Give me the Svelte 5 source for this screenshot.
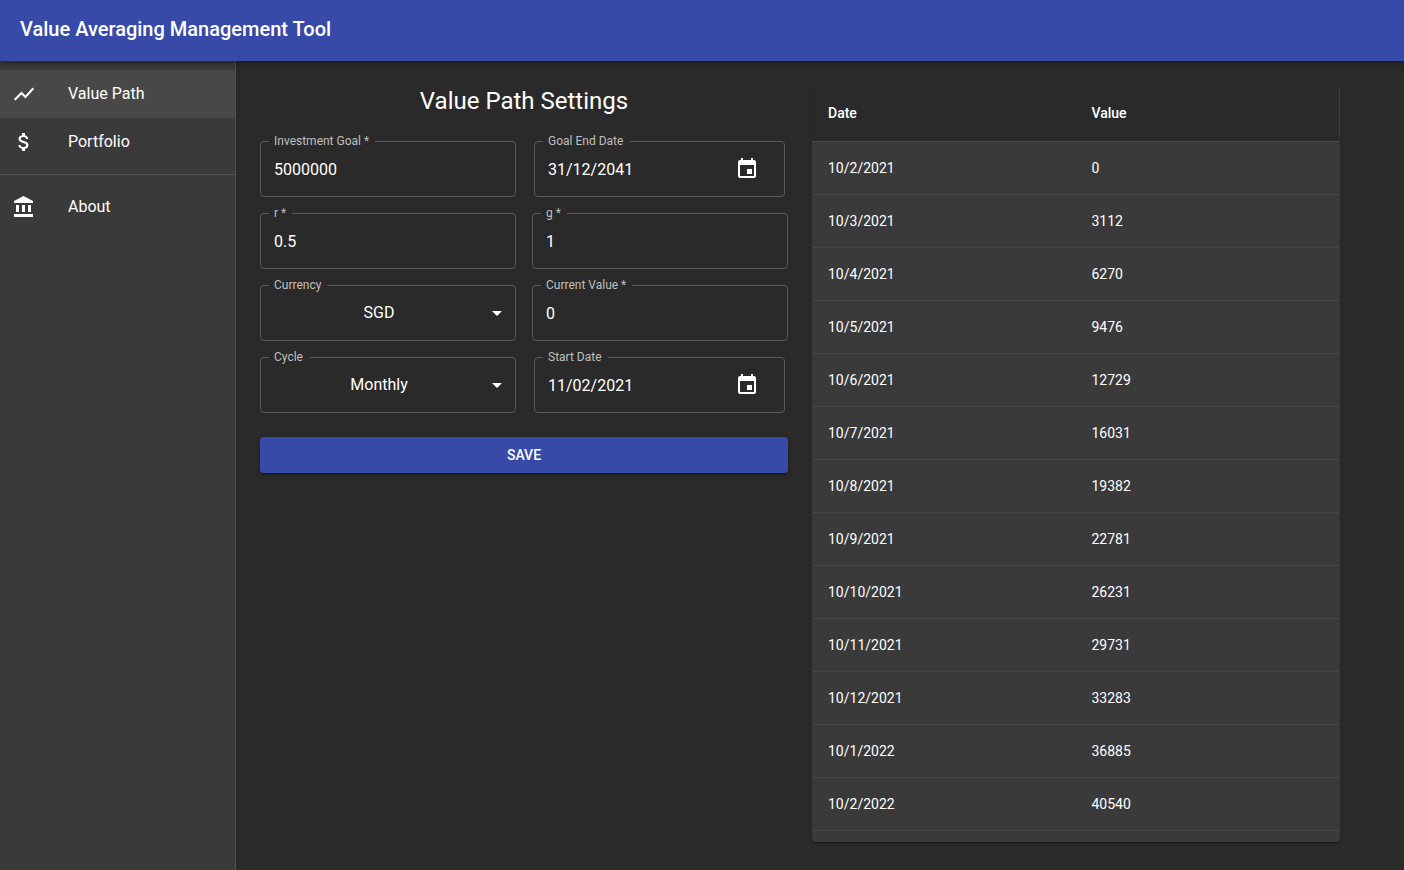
<script>
  const goalRows = [
    ['10/2/2021', 0],
    ['10/3/2021', 3112],
    ['10/4/2021', 6270],
    ['10/5/2021', 9476],
    ['10/6/2021', 12729],
    ['10/7/2021', 16031],
    ['10/8/2021', 19382],
    ['10/9/2021', 22781],
    ['10/10/2021', 26231],
    ['10/11/2021', 29731],
    ['10/12/2021', 33283],
    ['10/1/2022', 36885],
    ['10/2/2022', 40540]
  ];

  const fields = [
    { id: 'goal', label: 'Investment Goal *', kind: 'text', value: '5000000' },
    { id: 'end', label: 'Goal End Date', kind: 'date', value: '31/12/2041' },
    { id: 'r', label: 'r *', kind: 'text', value: '0.5' },
    { id: 'g', label: 'g *', kind: 'text', value: '1' },
    { id: 'currency', label: 'Currency', kind: 'select', value: 'SGD' },
    { id: 'current', label: 'Current Value *', kind: 'text', value: '0' },
    { id: 'cycle', label: 'Cycle', kind: 'select', value: 'Monthly' },
    { id: 'start', label: 'Start Date', kind: 'date', value: '11/02/2021' }
  ];

  const icons = {
    chart: 'M3.5 18.49l6-6.01 4 4L22 6.92l-1.41-1.41-7.09 7.97-4-4L2 16.99z',
    money:
      'M11.8 10.9c-2.27-.59-3-1.2-3-2.15 0-1.09 1.01-1.85 2.7-1.85 1.78 0 2.44.85 2.5 2.1h2.21c-.07-1.72-1.12-3.3-3.21-3.81V3h-3v2.16c-1.94.42-3.5 1.68-3.5 3.61 0 2.31 1.91 3.46 4.7 4.13 2.5.6 3 1.48 3 2.41 0 .69-.49 1.79-2.7 1.79-2.06 0-2.87-.92-2.98-2.1h-2.2c.12 2.19 1.76 3.42 3.68 3.83V21h3v-2.15c1.95-.37 3.5-1.5 3.5-3.55 0-2.84-2.43-3.81-4.7-4.4z',
    bank: 'M4 10v7h3v-7H4zm6 0v7h3v-7h-3zM2 22h19v-3H2v3zm14-12v7h3v-7h-3zm-4.5-9L2 6v2h19V6l-9.5-5z',
    event:
      'M17 12h-5v5h5v-5zM16 1v2H8V1H6v2H5c-1.11 0-1.99.9-1.99 2L3 19c0 1.1.89 2 2 2h14c1.1 0 2-.9 2-2V5c0-1.1-.9-2-2-2h-1V1h-2zm3 18H5V8h14v11z',
    down: 'M7 10l5 5 5-5z'
  };
</script>

{#snippet icon(name)}
  <svg viewBox="0 0 24 24" width="24" height="24" fill="currentColor" aria-hidden="true"><path d={icons[name]} /></svg>
{/snippet}

<div class="page">
  <header><h1>Value Averaging Management Tool</h1></header>
  <div class="body">
    <nav>
      <ul>
        <li><a class="selected" href="#path">{@render icon('chart')}<span>Value Path</span></a></li>
        <li><a href="#portfolio">{@render icon('money')}<span>Portfolio</span></a></li>
      </ul>
      <ul>
        <li><a href="#about">{@render icon('bank')}<span>About</span></a></li>
      </ul>
    </nav>
    <main>
      <form onsubmit={(e) => e.preventDefault()}>
        <h2>Value Path Settings</h2>
        <div class="fields">
          {#each fields as f (f.id)}
            <div class="field {f.kind}">
              <label for={f.id}>{f.label}</label>
              {#if f.kind === 'select'}
                <select id={f.id}><option>{f.value}</option></select>
                <span class="arrow">{@render icon('down')}</span>
              {:else}
                <input id={f.id} type="text" value={f.value} />
                {#if f.kind === 'date'}
                  <button type="button" class="pick" aria-labelledby={f.id}>{@render icon('event')}</button>
                {/if}
              {/if}
            </div>
          {/each}
        </div>
        <button class="save" type="submit">SAVE</button>
      </form>
      <div class="paper">
        <table>
          <thead>
            <tr><th scope="col">Date</th><th scope="col">Value</th></tr>
          </thead>
          <tbody>
            {#each goalRows as [date, value]}
              <tr><td>{date}</td><td>{value}</td></tr>
            {/each}
          </tbody>
        </table>
      </div>
    </main>
  </div>
</div>

<style>
  :global(body) {
    background: #2a2a2a;
  }
  .page {
    box-sizing: border-box;
    min-height: 100vh;
    display: flex;
    flex-direction: column;
    background: #2a2a2a;
    color: #fff;
    font-family: Roboto, 'Liberation Sans', sans-serif;
    font-size: 16px;
    line-height: 24px;
  }
  .page :global(*) {
    box-sizing: border-box;
  }
  header {
    position: relative;
    z-index: 2;
    padding: 13px 20px 16px;
    background: #374aa8;
    box-shadow:
      0 2px 4px -1px rgba(0, 0, 0, 0.2),
      0 4px 5px rgba(0, 0, 0, 0.14),
      0 1px 10px rgba(0, 0, 0, 0.12);
  }
  h1 {
    margin: 0;
    font-size: 20px;
    line-height: 32px;
    font-weight: 500;
  }
  .body {
    flex: 1;
    display: flex;
  }
  nav {
    flex: 0 0 236px;
    padding-top: 1px;
    background: #3a3a3a;
    border-right: 1px solid #515151;
  }
  ul {
    margin: 0;
    padding: 8px 0;
    list-style: none;
  }
  ul + ul {
    border-top: 1px solid #515151;
  }
  nav a {
    display: flex;
    align-items: center;
    gap: 32px;
    height: 48px;
    padding: 0 12px;
    color: #fff;
    text-decoration: none;
  }
  nav a.selected {
    background: #484848;
  }
  svg {
    display: block;
  }
  main {
    flex: 1;
    min-width: 0;
    display: grid;
    grid-template-columns: 1fr 1fr;
    align-items: start;
    gap: 24px;
    padding: 24px 64px 24px 24px;
  }
  form {
    display: grid;
    gap: 24px;
  }
  h2 {
    margin: 0;
    font-size: 24px;
    line-height: 32px;
    font-weight: 400;
    text-align: center;
  }
  .fields {
    display: grid;
    grid-template-columns: 1fr 1fr;
    gap: 16px;
  }
  .field {
    position: relative;
    display: flex;
    align-items: center;
    height: 56px;
    min-width: 0;
    border: 1px solid #5a5a5a;
    border-radius: 4px;
  }
  .date {
    margin: 0 3px 0 2px;
    padding-right: 13px;
  }
  label {
    position: absolute;
    top: -9px;
    left: 8px;
    padding: 0 6px 0 5px;
    background: #2a2a2a;
    color: #bfbfbf;
    font-size: 12px;
    line-height: 16px;
  }
  input,
  select {
    flex: 1;
    width: 100%;
    min-width: 0;
    height: 100%;
    margin: 0;
    padding: 0 13px;
    border: 0;
    outline: 0;
    background: transparent;
    color: #fff;
    font: inherit;
  }
  select {
    appearance: none;
    padding-right: 31px;
    text-align: center;
    text-align-last: center;
  }
  option {
    background: #3a3a3a;
  }
  .arrow {
    position: absolute;
    right: 6px;
    pointer-events: none;
  }
  .pick {
    padding: 12px;
    border: 0;
    border-radius: 50%;
    background: none;
    color: #fff;
  }
  .save {
    height: 36px;
    border: 0;
    border-radius: 4px;
    background: #374aa8;
    color: #fff;
    font: 500 14px/24px Roboto, 'Liberation Sans', sans-serif;
    box-shadow:
      0 3px 1px -2px rgba(0, 0, 0, 0.2),
      0 2px 2px rgba(0, 0, 0, 0.14),
      0 1px 5px rgba(0, 0, 0, 0.12);
  }
  .paper {
    height: 87vh;
    padding-right: 1px;
    overflow: auto;
    background: #3a3a3a;
    border-radius: 4px;
    box-shadow:
      0 2px 1px -1px rgba(0, 0, 0, 0.2),
      0 1px 1px rgba(0, 0, 0, 0.14),
      0 1px 3px rgba(0, 0, 0, 0.12);
  }
  table {
    width: 100%;
    table-layout: fixed;
    border-collapse: separate;
    border-spacing: 0;
    font-size: 14px;
  }
  th,
  td {
    padding: 16px;
    border-bottom: 1px solid #484848;
    text-align: left;
    line-height: 20px;
  }
  th {
    background: #2a2a2a;
    font-weight: 500;
    line-height: 24px;
  }
</style>
